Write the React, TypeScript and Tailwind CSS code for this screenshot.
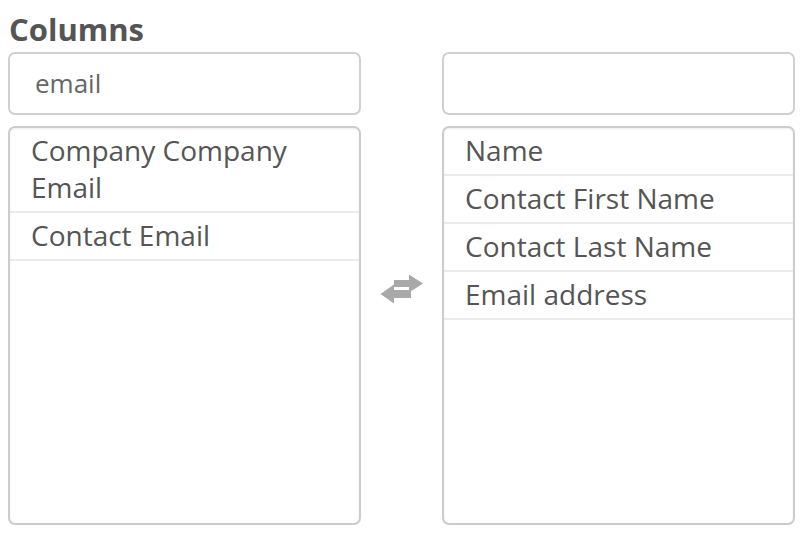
import React from 'react';

const available = ['Company Company Email', 'Contact Email'];
const selected = ['Name', 'Contact First Name', 'Contact Last Name', 'Email address'];

function ExchangeIcon() {
  return (
    <svg width="46" height="36" viewBox="0 0 46 36" className="text-[#a9a9a9]">
      <path d="M15 8 H30 V2.5 L44 11.5 L30 20.5 V15 H15 Z" fill="currentColor" />
      <path d="M32 18 H15 V12.5 L1.5 22 L15 31.5 V26 H32 Z" fill="currentColor" />
    </svg>
  );
}

function ColumnBox({ value, items }: { value: string; items: string[] }) {
  return (
    <div className="w-[353px] flex flex-col gap-[11px]">
      <div className="h-[63px] border-2 border-[#d0d0d0] rounded-[7px] bg-white flex items-center px-[25px] text-[26px] text-[#666]">
        {value}
      </div>
      <div className="h-[399px] border-2 border-[#cccccc] rounded-[7px] bg-white overflow-hidden shadow-[inset_0_1px_2px_rgba(0,0,0,0.08)]">
        {items.map((item) => (
          <div
            key={item}
            className="border-b-2 border-[#ebebeb] px-[21px] pt-[4px] pb-[5px] text-[28px] leading-[37px] text-[#555]"
          >
            {item}
          </div>
        ))}
      </div>
    </div>
  );
}

export default function App() {
  return (
    <div className="w-[808px] h-[542px] bg-white pl-[8px] pt-[9px] font-['Open_Sans',sans-serif]">
      <h2 className="text-[31px] leading-[40px] font-bold text-[#555] pl-[1px] mb-[3px]">Columns</h2>
      <div className="flex">
        <ColumnBox value="email" items={available} />
        <div className="w-[81px] flex justify-center">
          <div className="mt-[220px] h-[36px]">
            <ExchangeIcon />
          </div>
        </div>
        <ColumnBox value="" items={selected} />
      </div>
    </div>
  );
}
